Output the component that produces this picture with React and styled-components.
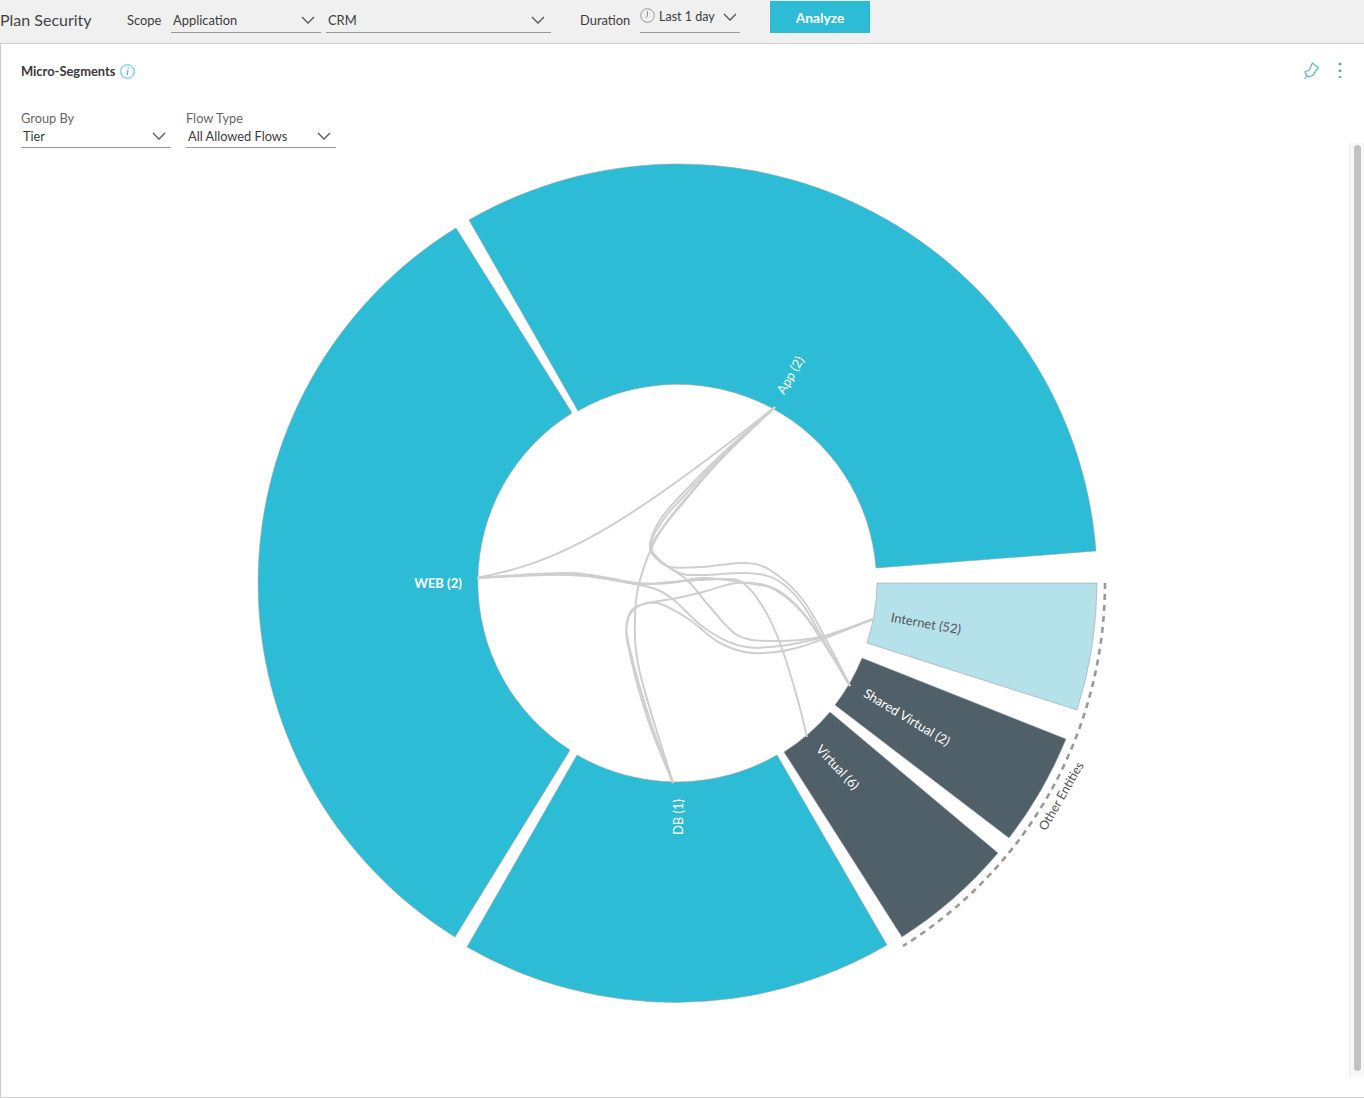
import React from 'react'
import styled, { createGlobalStyle } from 'styled-components'

const GlobalStyle = createGlobalStyle`
  html, body { margin: 0; padding: 0; background: #fff; }
  body { font-family: Lato, "Open Sans", sans-serif; color: #444; overflow: hidden; }
`

const Page = styled.div`
  width: 1364px;
  height: 1098px;
  overflow: hidden;
`
const TopBar = styled.div`
  height: 43px;
  background: #f0f0f0;
  border-bottom: 1px solid #ccc;
  display: flex;
  align-items: flex-start;
  box-sizing: content-box;
`
const Title = styled.div`
  width: 127px;
  padding: 10px 0 0 0;
  box-sizing: border-box;
  font-size: 16px;
  line-height: 19px;
  color: #444;
`
const BarLabel = styled.div`
  width: ${p => p.$width}px;
  padding-top: 12px;
  font-size: 12.9px;
  line-height: 16px;
  color: #3c3c3c;
  white-space: nowrap;
`
const BarSelect = styled.div`
  width: ${p => p.$width}px;
  margin-right: ${p => p.$gap || 0}px;
  height: 33px;
  box-sizing: border-box;
  border-bottom: 1px solid #999;
  display: flex;
  align-items: flex-start;
  justify-content: space-between;
  padding: 12px ${p => p.$right}px 0 ${p => p.$left ?? 2}px;
  font-size: 12.9px;
  line-height: 16px;
  color: #3c3c3c;
  white-space: nowrap;
`
const DurationValue = styled.div`
  display: flex;
  align-items: flex-start;
  gap: 4px;
  margin-top: -3px;
  font-size: 12.5px;
`
const ClockSvg = styled.svg`
  margin-top: -1px;
`
const AnalyzeButton = styled.button`
  width: 100px;
  height: 32px;
  margin: 1px 0 0 30px;
  padding: 0;
  border: 0;
  background: #2cbcd6;
  color: #fff;
  font-family: inherit;
  font-size: 13.8px;
  font-weight: 700;
`
const Card = styled.div`
  position: relative;
  height: 1054px;
  box-sizing: border-box;
  border-left: 1px solid #ccc;
  border-bottom: 1px solid #ccc;
  background: #fff;
  overflow: hidden;
`
const CardHeader = styled.div`
  height: 55px;
  padding: 19px 22px 0 20px;
  box-sizing: border-box;
  display: flex;
  justify-content: space-between;
  align-items: flex-start;
`
const CardTitle = styled.div`
  display: flex;
  align-items: center;
  gap: 5px;
  font-size: 12.9px;
  line-height: 16px;
  font-weight: 700;
  color: #3a3a3a;
`
const Actions = styled.div`
  display: flex;
  align-items: flex-start;
  gap: 18px;
  margin-top: -1px;
`
const Filters = styled.div`
  display: flex;
  gap: 15px;
  padding-left: 20px;
  height: 51px;
`
const Filter = styled.div`
  width: 150px;
`
const FilterLabel = styled.div`
  font-size: 12.8px;
  line-height: 16px;
  padding-top: 11px;
  color: #666;
`
const FilterSelect = styled.div`
  height: 20px;
  margin-top: 2px;
  box-sizing: border-box;
  border-bottom: 1px solid #999;
  display: flex;
  justify-content: space-between;
  align-items: flex-start;
  padding: 0 5px 0 2px;
  font-size: 12.8px;
  line-height: 16px;
  color: #3c3c3c;
`
const Chart = styled.svg`
  display: block;
  width: 1349px;
  height: 948px;
`
const Segment = styled.path`
  fill: ${p => p.$fill};
  stroke: #9aa5ad;
  stroke-width: 0.6;
`
const Flow = styled.path`
  fill: none;
  stroke: #cfcfcf;
  stroke-width: 2;
`
const Label = styled.text`
  font-family: Lato, sans-serif;
  font-size: ${p => p.$size || 13}px;
  font-weight: ${p => p.$bold ? 700 : 400};
  fill: ${p => p.$color || '#fff'};
  text-anchor: middle;
  dominant-baseline: central;
`
const ScrollTrack = styled.div`
  position: absolute;
  top: 99px;
  bottom: 20px;
  right: 0;
  width: 15px;
  box-sizing: border-box;
  padding: 2px 3px 6px 4px;
  background: #f8f8f8;
  border-left: 1px solid #eee;
`
const ScrollThumb = styled.div`
  height: 100%;
  border-radius: 4px;
  background: #c2c2c2;
`
const ChevronSvg = styled.svg`
  margin-top: ${p => p.$top ?? 4}px;
  flex: none;
`

const Chevron = ({ top }) => (
  <ChevronSvg $top={top} width="14" height="8" viewBox="0 0 14 8">
    <path d="M1 1l6 6 6-6" fill="none" stroke="#555" strokeWidth="1.3" />
  </ChevronSvg>
)

const Clock = () => (
  <ClockSvg width="15" height="15" viewBox="0 0 15 15">
    <circle cx="7.5" cy="7.5" r="6.8" fill="none" stroke="#999" strokeWidth="1" />
    <path d="M7.5 3v5l-1.6 1.8" fill="none" stroke="#888" strokeWidth="0.9" />
  </ClockSvg>
)

const InfoIcon = () => (
  <svg width="15" height="15" viewBox="0 0 15 15">
    <circle cx="7.5" cy="7.5" r="6.8" fill="none" stroke="#2cbcd6" strokeWidth="0.9" />
    <path d="M8.2 3.4v1.3M8 6.2L7 11.4" fill="none" stroke="#2cbcd6" strokeWidth="1.2" />
  </svg>
)

const PinIcon = () => (
  <svg width="16" height="18" viewBox="0 0 16 18">
    <path
      d="M8.5 1L14.5 6 11.5 9 9.5 13 4.5 15 2 12.5 1 9.5 5 8.5zM3 13.5L.5 17"
      fill="none"
      stroke="#5fb3c8"
      strokeWidth="1.2"
      strokeLinejoin="round"
    />
  </svg>
)

const MoreIcon = () => (
  <svg width="4" height="16" viewBox="0 0 4 16">
    <circle cx="2" cy="2" r="1.5" fill="#5fa9bb" />
    <circle cx="2" cy="8.7" r="1.5" fill="#5fa9bb" />
    <circle cx="2" cy="15.5" r="1.5" fill="#5fa9bb" />
  </svg>
)

// catmull-rom through the points read off the picture
const spline = pts => {
  let d = `M${pts[0][0]} ${pts[0][1]}`
  for (let i = 0; i < pts.length - 1; i++) {
    const p0 = pts[i - 1] || pts[i]
    const p1 = pts[i]
    const p2 = pts[i + 1]
    const p3 = pts[i + 2] || p2
    const c1x = p1[0] + (p2[0] - p0[0]) / 6
    const c1y = p1[1] + (p2[1] - p0[1]) / 6
    const c2x = p2[0] - (p3[0] - p1[0]) / 6
    const c2y = p2[1] - (p3[1] - p1[1]) / 6
    d += `C${c1x} ${c1y} ${c2x} ${c2y} ${p2[0]} ${p2[1]}`
  }
  return d
}

const APP = [775, 407]
const WEB = [477, 578]
const INTERNET = [876, 618]
const SHARED = [850, 686]
const VIRTUAL = [807, 737]
const DB = [673, 783]

const flows = [
  [APP, [723, 453], [683, 493], [660, 520], [650, 545], [656, 558], [670, 567], [703, 567], [743, 563], [770, 570], [803, 600], [830, 647], SHARED],
  [APP, [723, 457], [687, 497], [663, 527], [652, 550], [677, 572], [703, 575], [747, 573], [777, 580], [803, 605], [830, 652], SHARED],
  [APP, [723, 455], [685, 495], [661, 523], [651, 552], [687, 580], [710, 607], [737, 635], [770, 641], [820, 637], INTERNET],
  [APP, [723, 457], [683, 503], [657, 537], [640, 580], [635, 617], [640, 673], DB],
  [WEB, [570, 573], [637, 583], [670, 583], [703, 578], [747, 583], [777, 590], [803, 613], [830, 653], SHARED],
  [WEB, [570, 574], [637, 584], [670, 582], [723, 579], [743, 583], [763, 607], [780, 643], [797, 697], VIRTUAL],
  [WEB, [570, 575], [640, 585], [670, 597], [703, 627], [737, 645], [770, 647], [820, 638], INTERNET],
  [DB, [650, 720], [630, 650], [627, 623], [637, 607], [657, 603], [687, 618], [720, 643], [753, 653], [800, 647], INTERNET],
  [DB, [648, 720], [629, 650], [627, 622], [638, 606], [677, 598], [703, 592], [737, 583], [770, 587], [803, 613], [830, 652], SHARED],
]

const segments = [
  { fill: '#2cbcd6', d: 'M469 220A419 419 0 0 1 1096 551L876 568A199 199 0 0 0 578 411Z' },
  { fill: '#2cbcd6', d: 'M455 937A417 417 0 0 1 456 228L572 413A199 199 0 0 0 570 750Z' },
  { fill: '#2cbcd6', d: 'M887 945A419 419 0 0 1 467 947L577 755A199 199 0 0 0 777 755Z' },
  { fill: '#4f6068', d: 'M902 937A420 420 0 0 0 998 853L830 712A199 199 0 0 1 784 752Z' },
  { fill: '#4f6068', d: 'M1009 838A420 420 0 0 0 1066 739L862 658A199 199 0 0 1 835 705Z' },
  { fill: '#b5e1eb', d: 'M1077 710A420 420 0 0 0 1097 583L877 583A199 199 0 0 1 867 643Z' },
]

export default function App() {
  return (
    <Page>
      <GlobalStyle />
      <TopBar>
        <Title>Plan Security</Title>
        <BarLabel $width={44}>Scope</BarLabel>
        <BarSelect $width={150} $gap={5} $right={6}>Application<Chevron /></BarSelect>
        <BarSelect $width={225} $gap={29} $right={6}>CRM<Chevron /></BarSelect>
        <BarLabel $width={60}>Duration</BarLabel>
        <BarSelect $width={100} $right={3} $left={0}>
          <DurationValue><Clock />Last 1 day</DurationValue>
          <Chevron top={1} />
        </BarSelect>
        <AnalyzeButton>Analyze</AnalyzeButton>
      </TopBar>
      <Card>
        <CardHeader>
          <CardTitle>Micro-Segments <InfoIcon /></CardTitle>
          <Actions><PinIcon /><MoreIcon /></Actions>
        </CardHeader>
        <Filters>
          <Filter>
            <FilterLabel>Group By</FilterLabel>
            <FilterSelect>Tier<Chevron /></FilterSelect>
          </Filter>
          <Filter>
            <FilterLabel>Flow Type</FilterLabel>
            <FilterSelect>All Allowed Flows<Chevron /></FilterSelect>
          </Filter>
        </Filters>
        <Chart viewBox="1 150 1349 948">
          {segments.map(s => <Segment key={s.d} d={s.d} $fill={s.fill} />)}
          <Flow d="M477 578C560 562 620 530 775 407" />
          {flows.map((f, i) => <Flow key={i} d={spline(f)} />)}
          <path
            d="M1105 583A428 428 0 0 1 903 946"
            fill="none"
            stroke="#999"
            strokeWidth="2.6"
            strokeDasharray="6 5"
          />
          <Label x="790" y="375" transform="rotate(-60 790 375)">App (2)</Label>
          <Label x="438" y="583" $bold>WEB (2)</Label>
          <Label x="678" y="817" transform="rotate(-90 678 817)">DB (1)</Label>
          <Label x="926" y="623" $color="#555" transform="rotate(10 926 623)">Internet (52)</Label>
          <Label x="907" y="717" transform="rotate(31 907 717)">Shared Virtual (2)</Label>
          <Label x="838" y="767" transform="rotate(47 838 767)">Virtual (6)</Label>
          <Label x="1061" y="796" $size={12.5} $color="#555" transform="rotate(-60 1061 796)">Other Entities</Label>
        </Chart>
        <ScrollTrack><ScrollThumb /></ScrollTrack>
      </Card>
    </Page>
  )
}
